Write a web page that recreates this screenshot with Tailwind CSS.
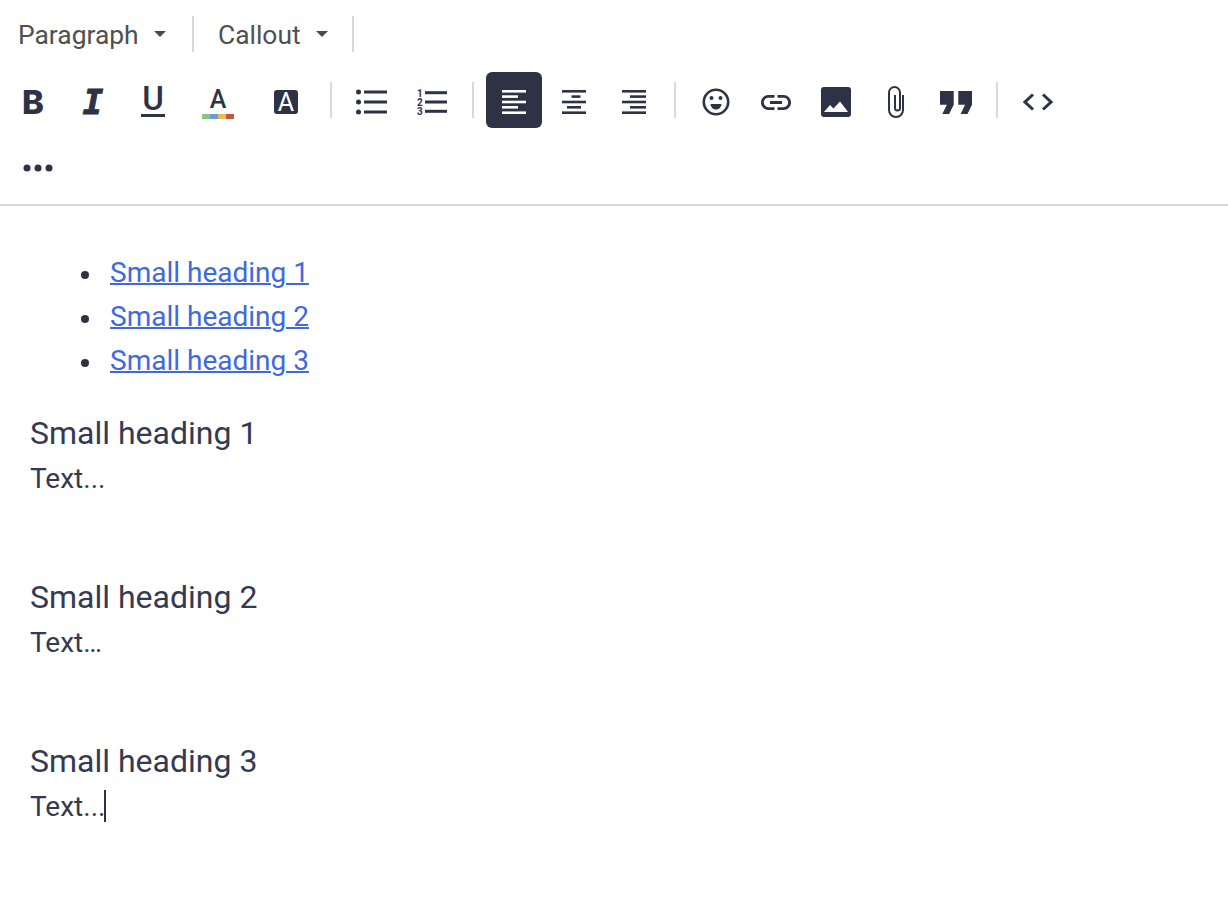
<!DOCTYPE html>
<html lang="en">
<head>
    <meta charset="UTF-8">
    <title>Editor</title>
    <script src="https://cdn.jsdelivr.net/npm/@tailwindcss/browser@4"></script>
</head>
<body class="bg-white font-['Roboto',sans-serif] text-[#333a52]">
    <!-- Toolbar -->
    <div class="border-b-2 border-[#d9d9d9] pt-[6px] pb-[10px] flex flex-col gap-[10px]">
        <!-- Dropdowns -->
        <div class="flex items-center h-[56px] text-[#505050] text-[26.4px]">
            <button class="flex items-center pl-[18px] pt-[4px] w-[192px]">
                <span>Paragraph</span>
                <svg class="ml-[15px] -mt-[3px]" width="12" height="6" viewBox="0 0 12 6"><polygon points="0,0 12,0 6,6" fill="#4a4a4a"/></svg>
            </button>
            <div class="w-[2px] h-[36px] bg-[#d9d9d9]"></div>
            <button class="flex items-center pl-[24px] pt-[4px] w-[158px]">
                <span>Callout</span>
                <svg class="ml-[15px] -mt-[3px]" width="12" height="6" viewBox="0 0 12 6"><polygon points="0,0 12,0 6,6" fill="#4a4a4a"/></svg>
            </button>
            <div class="w-[2px] h-[36px] bg-[#d9d9d9]"></div>
        </div>

        <!-- Format buttons -->
        <div class="flex items-center h-[56px] pl-[3px] text-[#2d3245]">
            <button class="w-[56px] h-[56px] mx-[2px] pt-1 flex items-center justify-center font-['Inter'] font-extrabold text-[33px] leading-none">B</button>
            <button class="w-[56px] h-[56px] mx-[2px] pt-1 flex items-center justify-center font-['DejaVu_Sans_Mono'] font-bold italic text-[34px] leading-none [-webkit-text-stroke:1px_#2d3245]">I</button>
            <button class="w-[56px] h-[56px] mx-[2px] pt-1 flex flex-col items-center justify-center">
                <span class="font-medium text-[33px] leading-[24px]">U</span>
                <span class="block w-[24px] h-[3px] bg-[#2d3245] mt-[3px]"></span>
            </button>
            <button class="w-[64px] h-[56px] ml-[3px] mr-[2px] pt-1 flex flex-col items-center justify-center">
                <span class="font-medium text-[25px] leading-[28px]">A</span>
                <span class="flex w-[32px] h-[5px]">
                    <span class="flex-1 bg-[#8cc47a]"></span>
                    <span class="flex-1 bg-[#6a9bd8]"></span>
                    <span class="flex-1 bg-[#e3bf57]"></span>
                    <span class="flex-1 bg-[#c1574a]"></span>
                </span>
            </button>
            <button class="w-[64px] h-[56px] mx-[2px] pt-1 flex items-center justify-center">
                <span class="w-[24px] h-[24px] rounded-[3px] bg-[#2d3245] text-white text-[25px] leading-[25px] text-center">A</span>
            </button>
            <div class="w-[2px] h-[36px] mx-[10px] bg-[#d9d9d9]"></div>

            <button class="w-[56px] h-[56px] mx-[2px] pt-1 flex items-center justify-center">
                <svg width="32" height="26" viewBox="0 0 32 26" fill="#2d3245">
                    <circle cx="2.500" cy="3" r="2.500"/><circle cx="2.500" cy="13" r="2.500"/><circle cx="2.500" cy="23" r="2.500"/>
                    <rect x="8" y="1.500" width="23" height="3"/><rect x="8" y="11.500" width="23" height="3"/><rect x="8" y="21.500" width="23" height="3"/>
                </svg>
            </button>
            <button class="w-[56px] h-[56px] mx-[2px] pt-1 flex items-center justify-center">
                <svg width="32" height="28" viewBox="0 0 32 28" fill="#2d3245">
                    <text x="1" y="9" font-family="Roboto" font-weight="700" font-size="10">1</text>
                    <text x="1" y="18" font-family="Roboto" font-weight="700" font-size="10">2</text>
                    <text x="1" y="27" font-family="Roboto" font-weight="700" font-size="10">3</text>
                    <rect x="9" y="3.200" width="22" height="3"/><rect x="9" y="12.500" width="22" height="3"/><rect x="9" y="21.800" width="22" height="3"/>
                </svg>
            </button>
            <div class="w-[2px] h-[36px] mx-[10px] bg-[#d9d9d9]"></div>

            <button class="w-[56px] h-[56px] mx-[2px] pt-1 flex items-center justify-center rounded-[6px] bg-[#2d3245]">
                <svg width="24" height="24" viewBox="0 0 24 24" fill="#fff">
                    <rect y="0" width="24" height="2.600"/><rect y="5.300" width="16" height="2.600"/><rect y="10.700" width="24" height="2.600"/><rect y="16" width="16" height="2.600"/><rect y="21.400" width="24" height="2.600"/>
                </svg>
            </button>
            <button class="w-[56px] h-[56px] mx-[2px] pt-1 flex items-center justify-center">
                <svg width="24" height="24" viewBox="0 0 24 24" fill="#2d3245">
                    <rect y="0" width="24" height="2.600"/><rect x="9.500" y="5.300" width="9" height="2.600"/><rect y="10.700" width="24" height="2.600"/><rect x="5" y="16" width="14" height="2.600"/><rect y="21.400" width="24" height="2.600"/>
                </svg>
            </button>
            <button class="w-[56px] h-[56px] mx-[2px] pt-1 flex items-center justify-center">
                <svg width="24" height="24" viewBox="0 0 24 24" fill="#2d3245">
                    <rect y="0" width="24" height="2.600"/><rect x="8" y="5.300" width="16" height="2.600"/><rect y="10.700" width="24" height="2.600"/><rect x="8" y="16" width="16" height="2.600"/><rect y="21.400" width="24" height="2.600"/>
                </svg>
            </button>
            <div class="w-[2px] h-[36px] mx-[10px] bg-[#d9d9d9]"></div>

            <button class="w-[56px] h-[56px] mx-[2px] pt-1 flex items-center justify-center">
                <svg width="28" height="28" viewBox="0 0 28 28">
                    <circle cx="14" cy="14" r="12.200" fill="none" stroke="#2d3245" stroke-width="2.600"/>
                    <circle cx="9.500" cy="10" r="2" fill="#2d3245"/><circle cx="18.500" cy="10" r="2" fill="#2d3245"/>
                    <path d="M8.500 16h11a5.500 5.500 0 0 1-11 0z" fill="#2d3245"/>
                </svg>
            </button>
            <button class="w-[56px] h-[56px] mx-[2px] pt-1 flex items-center justify-center">
                <svg width="30" height="15" viewBox="2 7 20 10" fill="#2d3245">
                    <path d="M3.900 12c0-1.710 1.390-3.100 3.100-3.100h4V7H7c-2.760 0-5 2.240-5 5s2.240 5 5 5h4v-1.900H7c-1.710 0-3.100-1.390-3.100-3.100zM8 13h8v-2H8v2zm9-6h-4v1.900h4c1.710 0 3.100 1.390 3.100 3.100s-1.390 3.100-3.100 3.100h-4V17h4c2.760 0 5-2.240 5-5s-2.240-5-5-5z"/>
                </svg>
            </button>
            <button class="w-[56px] h-[56px] mx-[2px] pt-1 flex items-center justify-center">
                <svg width="30" height="30" viewBox="0 0 30 30">
                    <rect width="30" height="30" rx="3" fill="#2d3245"/>
                    <polygon points="3,25 9,18 12.500,21.500 19,14.500 27,25" fill="#fff"/>
                </svg>
            </button>
            <button class="w-[56px] h-[56px] mx-[2px] pt-1 flex items-center justify-center">
                <svg width="16" height="32" viewBox="0 0 16 32" fill="none" stroke="#2d3245" stroke-width="2">
                    <path d="M15 9V24a7 7 0 0 1-14 0V6.500a5.500 5.500 0 0 1 11 0V22a2.500 2.500 0 0 1-5 0V9"/>
                </svg>
            </button>
            <button class="w-[56px] h-[56px] mx-[2px] pt-1 flex items-center justify-center">
                <svg width="32" height="23" viewBox="5 7 14 10" fill="#2d3245">
                    <path d="M6 17h3l2-4V7H5v6h3zm8 0h3l2-4V7h-6v6h3z"/>
                </svg>
            </button>
            <div class="w-[2px] h-[36px] mx-[10px] bg-[#d9d9d9]"></div>

            <button class="w-[56px] h-[56px] mx-[2px] pt-1 flex items-center justify-center">
                <svg width="30" height="18" viewBox="0 0 30 18" fill="none" stroke="#2d3245" stroke-width="3">
                    <path d="M10 1.500 2 9l8 7.500"/><path d="M20 1.500 28 9l-8 7.500"/>
                </svg>
            </button>
        </div>

        <!-- More -->
        <div class="flex items-center h-[56px] pl-[3px]">
            <button class="w-[56px] h-[56px] mx-[2px] pt-1 flex items-center justify-center">
                <svg class="ml-[10px]" width="32" height="8" viewBox="0 0 32 8" fill="#2d3245">
                    <circle cx="5" cy="4" r="3.500"/><circle cx="16" cy="4" r="3.500"/><circle cx="27" cy="4" r="3.500"/>
                </svg>
            </button>
        </div>
    </div>

    <!-- Editor content -->
    <div class="pt-[45px]">
        <ul class="pl-[81px] text-[28px] leading-[44px]">
            <li class="flex items-center"><span class="w-[8px] h-[8px] mt-[3px] mr-[21px] rounded-full bg-[#2d3245]"></span><a href="#" class="text-[#3f69e0] underline decoration-2">Small heading 1</a></li>
            <li class="flex items-center"><span class="w-[8px] h-[8px] mt-[3px] mr-[21px] rounded-full bg-[#2d3245]"></span><a href="#" class="text-[#3f69e0] underline decoration-2">Small heading 2</a></li>
            <li class="flex items-center"><span class="w-[8px] h-[8px] mt-[3px] mr-[21px] rounded-full bg-[#2d3245]"></span><a href="#" class="text-[#3f69e0] underline decoration-2">Small heading 3</a></li>
        </ul>
        <div class="pl-[30px] pt-[27px] flex flex-col gap-[72px]">
            <div>
                <h3 class="text-[32px] leading-[46px]">Small heading 1</h3>
                <p class="text-[28px] leading-[46px]">Text...</p>
            </div>
            <div>
                <h3 class="text-[32px] leading-[46px]">Small heading 2</h3>
                <p class="text-[28px] leading-[46px]">Text…</p>
            </div>
            <div>
                <h3 class="text-[32px] leading-[46px]">Small heading 3</h3>
                <p class="text-[28px] leading-[46px]">Text...<span class="inline-block w-[2px] h-[32px] -ml-[1px] bg-[#2d3245] align-[-6px]"></span></p>
            </div>
        </div>
    </div>
</body>
</html>
